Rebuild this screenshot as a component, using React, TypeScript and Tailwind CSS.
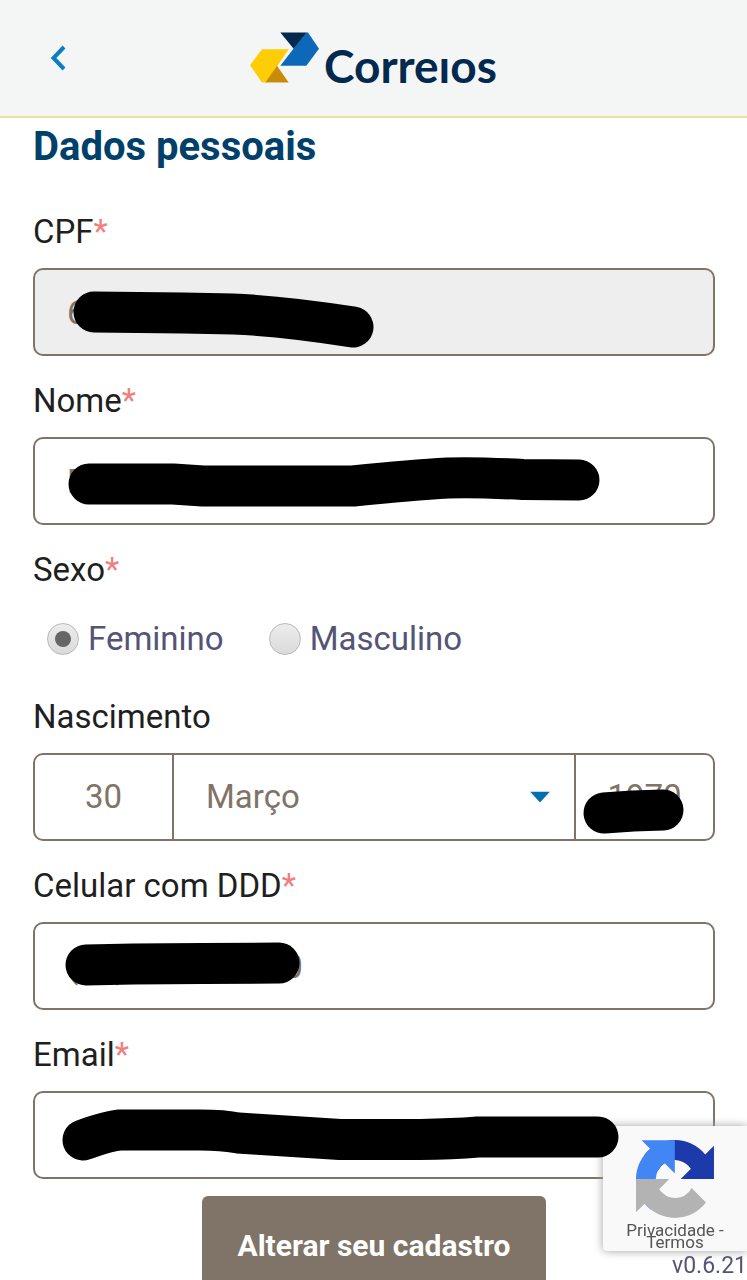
import { useState } from 'react';
import type { ReactNode } from 'react';

const boxClass =
  'block h-[88px] w-full rounded-[10px] border-2 border-[#7f7467] bg-white px-8 text-[33px] text-[#7f7467] outline-none disabled:bg-[#eeeeee]';

const months = [
  'Janeiro',
  'Fevereiro',
  'Março',
  'Abril',
  'Maio',
  'Junho',
  'Julho',
  'Agosto',
  'Setembro',
  'Outubro',
  'Novembro',
  'Dezembro',
];

function Redaction({ d }: { d: string }) {
  return (
    <svg
      className="pointer-events-none absolute left-0 top-0 z-20 overflow-visible"
      width="682"
      height="88"
      viewBox="0 0 682 88"
      fill="none"
      aria-hidden="true"
    >
      <path d={d} stroke="#000" strokeWidth="41" strokeLinecap="round" strokeLinejoin="round" />
    </svg>
  );
}

function Required() {
  return <span className="text-[#f08080]">*</span>;
}

type FieldProps = {
  id: string;
  label: string;
  value: string;
  stroke: string;
  type?: string;
  disabled?: boolean;
};

function Field({ id, label, value, stroke, type = 'text', disabled }: FieldProps) {
  return (
    <div className="flex flex-col gap-4">
      <label htmlFor={id} className="text-[33px] leading-10">
        {label}
        <Required />
      </label>
      <div className="relative">
        <input id={id} type={type} defaultValue={value} disabled={disabled} className={boxClass} />
        <Redaction d={stroke} />
      </div>
    </div>
  );
}

type RadioProps = { value: string; checked: boolean; onSelect: (value: string) => void; children: ReactNode };

function Radio({ value, checked, onSelect, children }: RadioProps) {
  return (
    <label className="flex items-center gap-[9px] text-[33px] leading-10 text-[#545476]">
      <input
        type="radio"
        name="sexo"
        value={value}
        checked={checked}
        onChange={() => onSelect(value)}
        className="grid size-8 appearance-none place-content-center rounded-full border border-[#b9b9b9] bg-linear-to-b from-[#ededed] to-[#dadada] before:size-4 before:rounded-full checked:before:bg-[#666666]"
      />
      {children}
    </label>
  );
}

function Logo() {
  return (
    <div className="flex items-start gap-[5px]" role="img" aria-label="Correios">
      <svg width="69" height="51" viewBox="36 36 207 152" aria-hidden="true">
        <path d="M36 135 72 87h80L84 187H72z" fill="#ffcd05" />
        <path d="M117 137 152 187H82z" fill="#c98c0a" />
        <path d="M205 37h5l33 49-38 51h-78l40-52z" fill="#0e68b9" />
        <path d="M127 37h79l-39 49z" fill="#04294f" />
      </svg>
      <span className="mt-[10px] font-[Lato,sans-serif] text-[46px] font-bold leading-[48px] text-[#04294f]">
        Correıos
      </span>
    </div>
  );
}

function RecaptchaIcon() {
  return (
    <svg width="78" height="78" viewBox="0 0 64 64" aria-hidden="true">
      <path
        fill="#1c3aa9"
        d="M64 31.955l-.033-1.37V4.687l-7.16 7.16C50.948 4.674 42.033.093 32.05.093c-10.4 0-19.622 4.96-25.458 12.64l11.736 11.86a15.55 15.55 0 0 1 4.754-5.334c2.05-1.6 4.952-2.906 8.968-2.906.485 0 .86.057 1.135.163 4.976.393 9.288 3.14 11.828 7.124l-8.307 8.307L64 31.953"
      />
      <path
        fill="#4285f4"
        d="M31.862.094l-1.37.033H4.594l7.16 7.16C4.58 13.147 0 22.06 0 32.046c0 10.4 4.96 19.622 12.64 25.458L24.5 45.768a15.55 15.55 0 0 1-5.334-4.754c-1.6-2.05-2.906-4.952-2.906-8.968 0-.485.057-.86.163-1.135.393-4.976 3.14-9.288 7.124-11.828l8.307 8.307L31.86.095"
      />
      <path
        fill="#b3b3b3"
        d="M.001 32.045l.033 1.37v25.898l7.16-7.16c5.86 7.173 14.774 11.754 24.76 11.754 10.4 0 19.622-4.96 25.458-12.64l-11.736-11.86a15.55 15.55 0 0 1-4.754 5.334c-2.05 1.6-4.952 2.906-8.968 2.906-.485 0-.86-.057-1.135-.163-4.976-.393-9.288-3.14-11.828-7.124l8.307-8.307c-10.522.04-22.4.066-27.295-.005"
      />
    </svg>
  );
}

export default function App() {
  const [gender, setGender] = useState('feminino');

  return (
    <div className="flex h-screen flex-col bg-white font-[Roboto,sans-serif] text-[#1f1f1f]">
      <header className="grid shrink-0 grid-cols-[1fr_auto_1fr] items-start border-b-2 border-[#ebdf9c] bg-[#f4f6f6] px-8 pb-[26px] pt-8">
        <button type="button" aria-label="Voltar" className="flex size-[52px] items-center justify-center">
          <svg width="16" height="26" viewBox="0 0 16 26" fill="none" aria-hidden="true">
            <path d="M14 2 3.500 13 14 24" stroke="#0b7fc0" strokeWidth="4" />
          </svg>
        </button>
        <Logo />
      </header>

      <main className="min-h-0 flex-1 overflow-y-auto pl-[33px] pr-8 pt-[5px] [scrollbar-width:none]">
        <h1 className="text-[40px] font-bold leading-[48px] text-[#00416b]">Dados pessoais</h1>

        <form className="mt-[41px] flex flex-col gap-[25px]" onSubmit={(e) => e.preventDefault()}>
          <Field id="cpf" label="CPF" value="6" disabled stroke="M61 44 L150 45 L200 46 Q250 48 320 59" />
          <Field
            id="nome"
            label="Nome"
            value="F"
            stroke="M56 47 L140 47 L170 49 H320 Q380 43 415 41 Q440 40 490 42.500 L546 43"
          />

          <fieldset>
            <legend className="text-[33px] leading-10">
              Sexo
              <Required />
            </legend>
            <div className="flex gap-[45px] px-[14px] pb-[13px] pt-[29px]">
              <Radio value="feminino" checked={gender === 'feminino'} onSelect={setGender}>
                Feminino
              </Radio>
              <Radio value="masculino" checked={gender === 'masculino'} onSelect={setGender}>
                Masculino
              </Radio>
            </div>
          </fieldset>

          <div className="flex flex-col gap-4">
            <label htmlFor="dia" className="text-[33px] leading-10">
              Nascimento
            </label>
            <div className="relative flex h-[88px] rounded-[10px] border-2 border-[#7f7467] text-[33px] text-[#7f7467]">
              <input
                id="dia"
                defaultValue="30"
                className="w-[139px] shrink-0 border-r-2 border-[#7f7467] bg-transparent text-center outline-none"
              />
              <div className="relative min-w-0 flex-1">
                <select
                  aria-label="Mês"
                  defaultValue="Março"
                  className="size-full appearance-none bg-transparent px-8 outline-none"
                >
                  {months.map((month) => (
                    <option key={month}>{month}</option>
                  ))}
                </select>
                <svg
                  className="pointer-events-none absolute right-6 top-1/2 -translate-y-1/2"
                  width="20"
                  height="11"
                  viewBox="0 0 20 11"
                  aria-hidden="true"
                >
                  <path d="M0 0h20L10 11z" fill="#0071ad" />
                </svg>
              </div>
              <input
                aria-label="Ano"
                defaultValue="1970"
                className="w-[139px] shrink-0 border-l-2 border-[#7f7467] bg-transparent text-center outline-none"
              />
              <Redaction d="M569 58 L598 56 L628 55" />
            </div>
          </div>

          <Field
            id="celular"
            label="Celular com DDD"
            type="tel"
            value="(00)00000-0000"
            stroke="M53 43 L100 42 L170 41.500 L246 41"
          />
          <Field
            id="email"
            label="Email"
            type="email"
            value=""
            stroke="M50 49 Q75 40 87 39 H167 Q190 39 205 42 L307 48.500 H387 Q420 48 445 46 H565"
          />

          <button
            type="submit"
            className="-mt-2 self-center rounded-md bg-[#7f7467] px-9 py-8 text-[30px] font-bold leading-9 text-white"
          >
            Alterar seu cadastro
          </button>
        </form>
      </main>

      <div className="fixed bottom-[29px] right-0 z-10 flex h-[125px] w-36 flex-col items-center rounded-l-sm bg-[#f9f9f9] pt-[14px] shadow-[0_0_10px_#a0a0a0]">
        <RecaptchaIcon />
        <p className="mt-[6px] px-4 text-center text-[17px] leading-3 text-[#555555]">
          <a href="#privacidade">Privacidade</a> - <a href="#termos">Termos</a>
        </p>
      </div>
      <p className="fixed bottom-0 right-0 text-[23px] leading-7 text-[#545476]">v0.6.21</p>
    </div>
  );
}
